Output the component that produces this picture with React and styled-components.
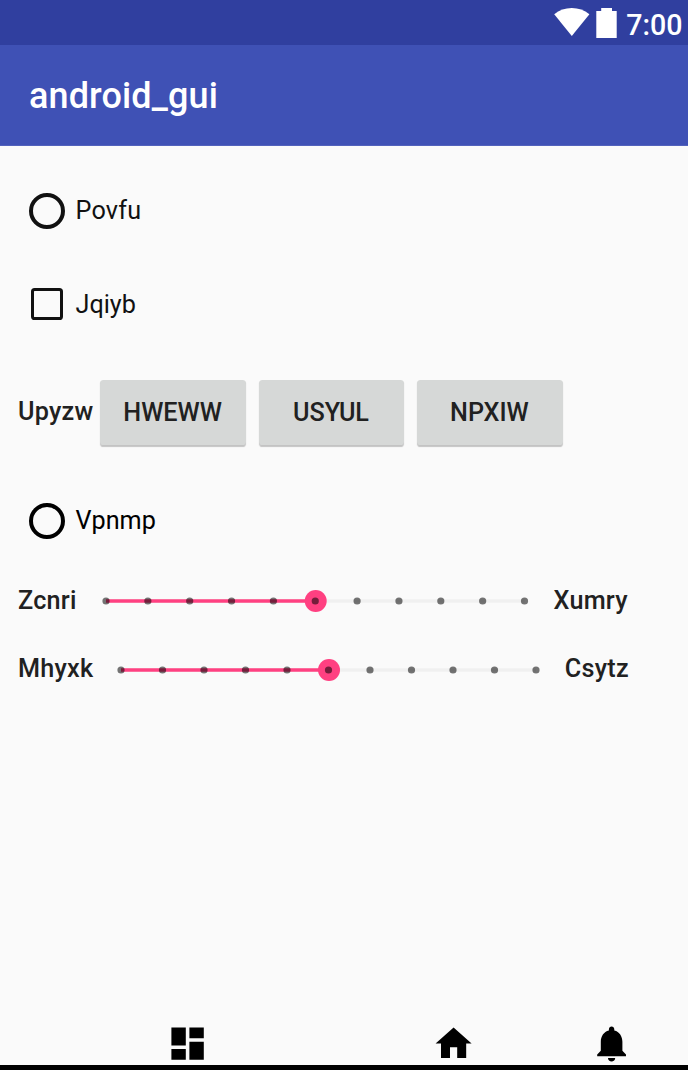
import React from 'react';
import styled, { createGlobalStyle } from 'styled-components';

const GlobalStyle = createGlobalStyle`
  * { box-sizing: border-box; }
  body { margin: 0; background: #fafafa; }
`;

const Screen = styled.div`
  width: 688px;
  height: 1070px;
  display: flex;
  flex-direction: column;
  overflow: hidden;
  background: #fafafa;
  color: #212121;
  font-family: Roboto, sans-serif;
  font-size: 25.2px;
  line-height: 30px;
`;

const StatusBar = styled.header`
  flex: none;
  height: 45px;
  display: flex;
  justify-content: flex-end;
  align-items: flex-start;
  padding: 8px 5.5px 0 0;
  background: #303f9f;
  color: #fff;
`;

const StatusIcon = styled.svg`
  flex: none;
  display: block;
  margin-right: ${p => p.$gap}px;
  fill: #fff;
`;

const Clock = styled.span`
  font-size: 28.6px;
  font-weight: 500;
  line-height: 35px;
`;

const AppBar = styled.div`
  flex: none;
  height: 101px;
  display: flex;
  align-items: center;
  padding: 2px 0 0 29px;
  background: #3f51b5;
  color: #fff;
  border-bottom: 1px solid #5262bc;
`;

const Title = styled.h1`
  margin: 0;
  font-size: 36px;
  font-weight: 500;
  line-height: 42px;
  letter-spacing: 0.12px;
`;

const Content = styled.main`
  flex: 1;
  min-height: 0;
`;

const ChoiceRow = styled.label`
  display: flex;
  align-items: center;
  height: ${p => p.$height}px;
  padding-left: 29px;
  color: ${p => p.$color || '#111'};
`;

const ChoiceText = styled.span`
  margin: ${p => p.$top ?? -1}px 0 0 ${p => p.$gap || 10.5}px;
  letter-spacing: ${p => p.$tracking || 0}px;
`;

const Radio = styled.span`
  width: 36px;
  height: 36px;
  border: 4px solid currentColor;
  border-radius: 50%;
`;

const Checkbox = styled.span`
  width: 32.5px;
  height: 32.5px;
  margin-left: 1.5px;
  border: 3.6px solid currentColor;
  border-radius: 3.6px;
`;

const ButtonRow = styled.div`
  display: flex;
  align-items: center;
  gap: 13px;
  height: 124px;
  margin-top: 18px;
  padding-left: 18px;
`;

const Label = styled.span`
  flex: none;
  width: ${p => p.$width}px;
  margin-top: ${p => p.$top ?? -1}px;
  font-weight: 500;
  letter-spacing: 0.25px;
  white-space: nowrap;
`;

const Button = styled.button`
  flex: none;
  width: 145.4px;
  height: 65px;
  padding: 1px 1px 0 0;
  border: 0;
  border-radius: 3.6px;
  background: #d6d8d7;
  color: #212121;
  font: 500 25.2px/30px Roboto, sans-serif;
  box-shadow: 0 1.5px 1px rgba(0, 0, 0, 0.22);
`;

const SliderRow = styled.div`
  display: flex;
  align-items: center;
  height: ${p => p.$height}px;
  padding-left: 18px;
`;

const SliderGraphic = styled.svg`
  flex: none;
  display: block;
  overflow: visible;
  margin-right: ${p => p.$gap}px;
`;

const NavBar = styled.nav`
  flex: none;
  height: 48px;
  display: flex;
  align-items: flex-start;
  padding-left: 165.6px;
  border-bottom: 5px solid #000;
`;

const NavIcon = styled.svg`
  flex: none;
  display: block;
  width: 43.2px;
  height: 43.2px;
  margin-right: ${p => p.$gap || 0}px;
  fill: #000;
`;

function Slider({ width, thumb, gap }) {
  const ticks = Array.from({ length: 11 }, (_, i) => (width * i) / 10);
  return (
    <SliderGraphic width={width} height="24" $gap={gap}>
      <path d={`M0 12H${width}`} stroke="#f0f0f0" strokeWidth="3.6" />
      <path d={`M0 12H${thumb}`} stroke="#ff4081" strokeWidth="3.6" />
      <circle cx={thumb} cy="12" r="11" fill="#ff4081" />
      {ticks.map(x => (
        <circle key={x} cx={x} cy="12" r="3.6" fill="#000" fillOpacity="0.54" />
      ))}
    </SliderGraphic>
  );
}

export default function App() {
  return (
    <>
      <GlobalStyle />
      <Screen>
        <StatusBar>
          <StatusIcon width="36" height="28" viewBox="0 0 36 28" $gap={6}>
            <path d="M.2 6.2C5.2 2.2 11.2.1 17.8.1S30.4 2.2 35.4 6.2L17.8 28Z" />
          </StatusIcon>
          <StatusIcon width="21" height="30" viewBox="0 0 21 30" $gap={9}>
            <path d="M5.2 0H16v3h4.7v27H.3V3h4.9Z" />
          </StatusIcon>
          <Clock>7:00</Clock>
        </StatusBar>
        <AppBar>
          <Title>android_gui</Title>
        </AppBar>
        <Content>
          <ChoiceRow $height={130}>
            <Radio />
            <ChoiceText $tracking={0.2}>Povfu</ChoiceText>
          </ChoiceRow>
          <ChoiceRow $height={56}>
            <Checkbox />
            <ChoiceText $gap={12.5} $top={1}>Jqiyb</ChoiceText>
          </ChoiceRow>
          <ButtonRow>
            <Label $width={69.4} $top={0}>Upyzw</Label>
            <Button>HWEWW</Button>
            <Button>USYUL</Button>
            <Button>NPXIW</Button>
          </ButtonRow>
          <ChoiceRow $height={93} $color="#000">
            <Radio />
            <ChoiceText $top={0}>Vpnmp</ChoiceText>
          </ChoiceRow>
          <SliderRow $height={68}>
            <Label $width={88}>Zcnri</Label>
            <Slider width={418.5} thumb={209.7} gap={29} />
            <Label>Xumry</Label>
          </SliderRow>
          <SliderRow $height={69}>
            <Label $width={103.3}>Mhyxk</Label>
            <Slider width={415} thumb={208} gap={28.5} />
            <Label>Csytz</Label>
          </SliderRow>
        </Content>
        <NavBar>
          <NavIcon viewBox="0 0 24 24" $gap={223.2}>
            <path d="M3 13h8V3H3v10zm0 8h8v-6H3v6zm10 0h8V11h-8v10zm0-18v6h8V3h-8z" />
          </NavIcon>
          <NavIcon viewBox="0 0 24 24" $gap={115}>
            <path d="M10 20v-6h4v6h5v-8h3L12 3 2 12h3v8z" />
          </NavIcon>
          <NavIcon viewBox="0 0 24 24">
            <path d="M12 22c1.1 0 2-.9 2-2h-4c0 1.1.89 2 2 2zm6-6v-5c0-3.07-1.64-5.64-4.5-6.32V4c0-.83-.67-1.5-1.5-1.5s-1.5.67-1.5 1.5v.68C7.63 5.36 6 7.92 6 11v5l-2 2v1h16v-1l-2-2z" />
          </NavIcon>
        </NavBar>
      </Screen>
    </>
  );
}
